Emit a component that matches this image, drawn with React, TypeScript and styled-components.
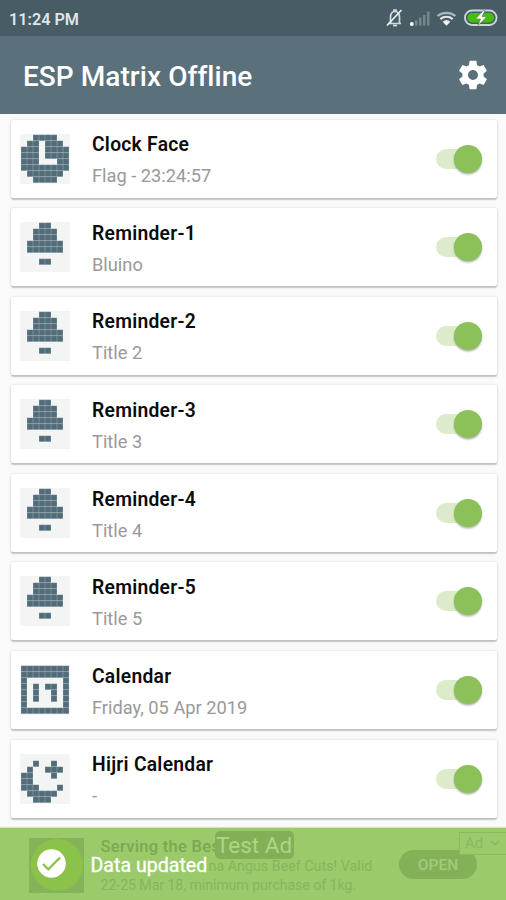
import React from "react";
import styled, { createGlobalStyle } from "styled-components";

const Global = createGlobalStyle`
  * { box-sizing: border-box; }
  body { margin: 0; background: #fafafa; font-family: Roboto, "Liberation Sans", sans-serif; }
`;

const Screen = styled.div`
  width: 506px;
  height: 900px;
  display: flex;
  flex-direction: column;
  overflow: hidden;
  background: #fafafa;
`;

const StatusBar = styled.div`
  height: 35.5px;
  flex: none;
  padding: 3px 8px 0 9px;
  display: flex;
  align-items: center;
  justify-content: space-between;
  background: #475c65;
`;

const Time = styled.span`
  font-size: 16.2px;
  font-weight: 600;
  color: #dfe5e8;
  white-space: nowrap;
`;

const StatusGlyphs = styled.svg`
  margin-top: -5px;
`;

const AppBar = styled.header`
  height: 78.5px;
  flex: none;
  padding: 0 16px 0 23px;
  display: flex;
  align-items: center;
  justify-content: space-between;
  background: #5a707b;
`;

const Heading = styled.h1`
  margin: 0;
  padding-top: 5px;
  font-size: 28px;
  font-weight: 500;
  line-height: 36px;
  letter-spacing: 0.05px;
  color: #fff;
  white-space: nowrap;
`;

const List = styled.main`
  flex: 1;
  min-height: 0;
  display: flex;
  flex-direction: column;
  gap: 10.6px;
  padding: 5.5px 9.5px 0 10.5px;
`;

const Card = styled.section`
  height: 78px;
  flex: none;
  padding: 0 15px 0 9px;
  display: flex;
  align-items: center;
  background: #fff;
  border-radius: 2px;
  box-shadow: 0 1.5px 1.5px rgba(0, 0, 0, 0.2), 0 0 3px rgba(0, 0, 0, 0.12);
`;

const Details = styled.div`
  flex: 1;
  padding: 4.5px 0 0 22.5px;
  display: flex;
  flex-direction: column;
  gap: 7px;
`;

const Title = styled.div`
  font-size: 19.3px;
  line-height: 24px;
  font-weight: 600;
  letter-spacing: 0.26px;
  color: #0c0c0c;
  white-space: nowrap;
`;

const Subtitle = styled.div`
  font-size: 18.25px;
  line-height: 24px;
  color: #999;
  white-space: nowrap;
`;

const Track = styled.div`
  width: 46px;
  height: 20px;
  border-radius: 10px;
  display: flex;
  align-items: center;
  justify-content: flex-end;
  background: linear-gradient(90deg, #dcebc9 38px, transparent 38px);
`;

const Thumb = styled.div`
  width: 28px;
  height: 28px;
  flex: none;
  border-radius: 50%;
  background: #8bc158;
  box-shadow: 0 1.5px 2px rgba(0, 0, 0, 0.3);
`;

const Footer = styled.footer`
  position: relative;
  height: 72.5px;
  flex: none;
  background: #9bca6a;
  box-shadow: 0 -1px 1px #d5e7c2;
`;

const AdBanner = styled.div`
  height: 100%;
  padding: 2.5px 29px 0 28.5px;
  display: flex;
  align-items: center;
`;

const AdArt = styled.div`
  width: 55px;
  height: 55px;
  flex: none;
  padding-left: 2px;
  display: flex;
  align-items: center;
  background: #84b359;
`;

const AdDisc = styled.div`
  width: 52px;
  height: 52px;
  border-radius: 50%;
  background: #8bc34a;
`;

const AdCopy = styled.div`
  flex: 1;
  padding: 1px 0 0 17px;
  display: flex;
  flex-direction: column;
`;

const AdHeadline = styled.div`
  font-size: 16.5px;
  line-height: 20px;
  font-weight: 500;
  letter-spacing: 0.3px;
  color: #7ba853;
  white-space: nowrap;
`;

const AdLine = styled.div<{ $indent?: boolean }>`
  padding-left: ${(p) => (p.$indent ? 108 : 0)}px;
  font-size: 14.2px;
  line-height: 19px;
  letter-spacing: ${(p) => (p.$indent ? 0.05 : -0.08)}px;
  color: #86b55c;
  white-space: nowrap;
`;

const OpenButton = styled.div`
  width: 78px;
  height: 29px;
  flex: none;
  margin-bottom: 1px;
  display: flex;
  align-items: center;
  justify-content: center;
  border-radius: 15px;
  background: #83b157;
  color: #a3ca7b;
  font-size: 15.5px;
  font-weight: 500;
`;

const TestAd = styled.div`
  position: absolute;
  left: 214.5px;
  top: 3px;
  width: 79px;
  height: 28px;
  border-radius: 5px;
  background: #83b057;
  color: #add683;
  font-size: 22.5px;
  line-height: 29px;
  text-align: center;
  white-space: nowrap;
`;

const AdChoice = styled.div`
  position: absolute;
  right: -2px;
  top: 4px;
  width: 49px;
  height: 23.5px;
  padding-left: 5px;
  display: flex;
  align-items: center;
  gap: 7px;
  border: 1.5px solid #8bb963;
  background: #9bca6a;
  color: #8ab860;
  font-size: 15px;
`;

const Toast = styled.div`
  position: absolute;
  inset: 0;
  padding-left: 36.5px;
  display: flex;
  align-items: center;
  gap: 25px;
`;

const Message = styled.div`
  padding-top: 4px;
  font-size: 19.6px;
  line-height: 26px;
  -webkit-text-stroke: 0.3px #fff;
  color: #fff;
  white-space: nowrap;
`;

const clock = ["..####..", ".##.###.", "###.####", "###.####", "###...##", "########", ".######.", "..####.."];
const bell = ["...##...", "..####..", "..####..", ".######.", ".######.", "........", "...##...", "........"];
const calendar = ["########", "########", "#......#", "#.#.##.#", "#.#..#.#", "#.#..#.#", "#......#", "########"];
const moon = ["........", "..#..#..", ".#..###.", "##...#..", "##......", "###...#.", ".#####..", "..###..."];

function PixelIcon({ rows }: { rows: string[] }) {
  return (
    <svg width="50" height="50" viewBox="0 0 50 50">
      <rect width="50" height="50" fill="#f3f4f4" />
      {rows.flatMap((row, y) =>
        [...row].map((c, x) =>
          c === "#" ? (
            <g key={`${x}-${y}`}>
              <rect x={1 + x * 6} y={0.7 + y * 6} width="6" height="6" fill="#82969f" />
              <rect x={1.4 + x * 6} y={1.1 + y * 6} width="5.2" height="5.2" fill="#526d79" />
            </g>
          ) : null
        )
      )}
    </svg>
  );
}

const entries = [
  { title: "Clock Face", sub: "Flag - 23:24:57", icon: clock },
  ...["Bluino", "Title 2", "Title 3", "Title 4", "Title 5"].map((sub, i) => ({
    title: `Reminder-${i + 1}`,
    sub,
    icon: bell,
  })),
  { title: "Calendar", sub: "Friday, 05 Apr 2019", icon: calendar },
  { title: "Hijri Calendar", sub: "-", icon: moon },
];

function StatusIcons() {
  return (
    <StatusGlyphs width="113" height="26" viewBox="0 0 113 26" fill="none">
      <g stroke="#d3dadd" strokeWidth="1.7">
        <path d="M3.500 19.500h12.500M5.500 19.500v-6c0-4 1.600-6 4.500-6s4.500 2 4.500 6v6M9 7.500V6h2v1.500" />
        <path d="M2 21.500 16.500 6" stroke="#eef1f2" />
        <path d="M8 21.500h4" strokeWidth="1.800" />
      </g>
      <circle cx="26.800" cy="20" r="1.900" fill="#fff" />
      <g fill="#75868d">
        <rect x="30" y="16.500" width="2.500" height="5" />
        <rect x="34" y="13.500" width="2.500" height="8" />
        <rect x="38" y="11" width="2.500" height="10.500" />
        <rect x="42" y="7.500" width="2.500" height="14" />
      </g>
      <g stroke="#dfe5e7" strokeWidth="2.200">
        <path d="M52.500 12c5.300-4.300 12.700-4.300 18 0" stroke="#aab7bc" />
        <path d="M55.300 15.200c3.700-3 8.700-3 12.400 0M58.300 18.300c2-1.600 4.400-1.600 6.400 0" />
      </g>
      <path d="m58.700 18.800 2.800 3 2.800-3c-1.600-1.300-4-1.300-5.600 0Z" fill="#fff" />
      <rect x="80" y="6.500" width="31.500" height="14.500" rx="7" stroke="#cfd5d7" strokeWidth="1.800" />
      <rect x="82.500" y="9.100" width="26.500" height="9.300" rx="4.600" fill="#45be12" />
      <path d="m98.500 6.500-8 8.500h5l-2.500 6.500 9-9h-5l3-6Z" fill="#fff" stroke="#5b823e" strokeWidth=".6" />
    </StatusGlyphs>
  );
}

export default function App() {
  return (
    <Screen>
      <Global />
      <StatusBar>
        <Time>11:24 PM</Time>
        <StatusIcons />
      </StatusBar>
      <AppBar>
        <Heading>ESP Matrix Offline</Heading>
        <svg width="34" height="34" viewBox="0 0 24 24" fill="#fff">
          <path d="M19.430 12.980c.040-.320.070-.640.070-.980s-.030-.660-.070-.980l2.110-1.650c.190-.150.240-.420.120-.640l-2-3.460c-.120-.220-.390-.300-.610-.220l-2.490 1c-.520-.400-1.080-.730-1.690-.980l-.380-2.650C14.460 2.180 14.250 2 14 2h-4c-.250 0-.460.180-.490.420l-.380 2.650c-.610.250-1.170.590-1.690.980l-2.490-1c-.230-.090-.490 0-.610.220l-2 3.460c-.130.220-.070.490.120.640l2.110 1.650c-.040.320-.070.650-.070.980s.030.660.070.980l-2.110 1.650c-.190.150-.240.420-.120.640l2 3.460c.120.220.390.300.610.220l2.490-1c.520.400 1.080.730 1.690.980l.380 2.650c.030.240.240.420.490.420h4c.250 0 .460-.180.490-.420l.380-2.650c.610-.250 1.170-.590 1.690-.980l2.490 1c.230.090.490 0 .610-.220l2-3.460c.120-.220.070-.490-.120-.640l-2.110-1.650zM12 15.500c-1.930 0-3.500-1.570-3.500-3.500s1.570-3.500 3.500-3.500 3.500 1.570 3.500 3.500-1.570 3.500-3.500 3.500z" />
        </svg>
      </AppBar>
      <List>
        {entries.map((e) => (
          <Card key={e.title}>
            <PixelIcon rows={e.icon} />
            <Details>
              <Title>{e.title}</Title>
              <Subtitle>{e.sub}</Subtitle>
            </Details>
            <Track>
              <Thumb />
            </Track>
          </Card>
        ))}
      </List>
      <Footer>
        <AdBanner>
          <AdArt>
            <AdDisc />
          </AdArt>
          <AdCopy>
            <AdHeadline>Serving the Bes</AdHeadline>
            <AdLine $indent>na Angus Beef Cuts! Valid</AdLine>
            <AdLine>22-25 Mar 18, minimum purchase of 1kg.</AdLine>
          </AdCopy>
          <OpenButton>OPEN</OpenButton>
        </AdBanner>
        <TestAd>Test Ad</TestAd>
        <AdChoice>
          Ad
          <svg width="10" height="7" viewBox="0 0 10 7" fill="none" stroke="currentColor" strokeWidth="1.500">
            <path d="m1 1 4 4 4-4" />
          </svg>
        </AdChoice>
        <Toast>
          <svg width="29" height="29" viewBox="0 0 29 29">
            <circle cx="14.500" cy="14.500" r="14.300" fill="#fff" />
            <path d="m6 15 5.300 5.300L23 8.500" fill="none" stroke="#8bc34a" strokeWidth="2.400" />
          </svg>
          <Message>Data updated</Message>
        </Toast>
      </Footer>
    </Screen>
  );
}
